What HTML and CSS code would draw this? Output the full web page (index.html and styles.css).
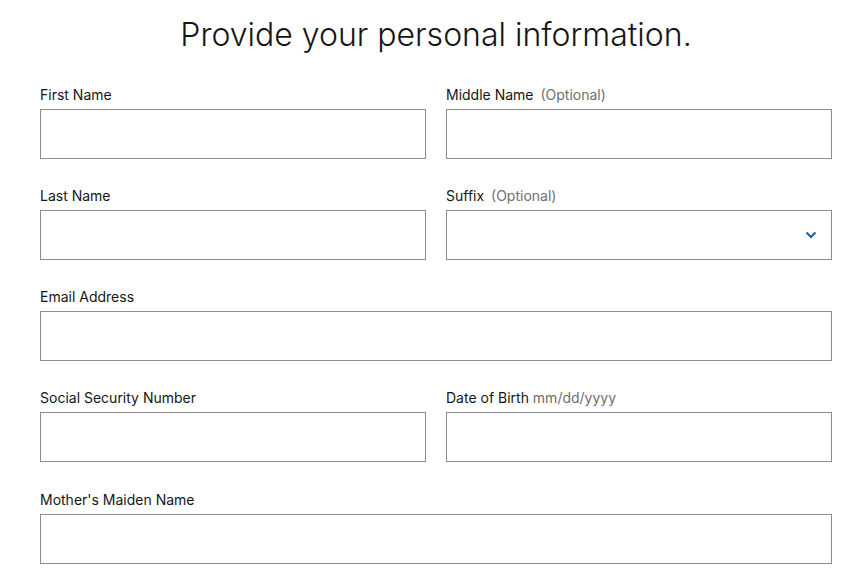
FILE: index.html
```html
<!DOCTYPE html>
<html>
<head>
<meta charset="utf-8">
<link rel="stylesheet" href="styles.css">
</head>
<body>
<main class="page">
  <h1 class="title">Provide your personal information.</h1>
  <form class="form">
    <div class="field">
      <label class="label">First Name</label>
      <div class="input"></div>
    </div>
    <div class="field">
      <label class="label">Middle Name <span class="hint">(Optional)</span></label>
      <div class="input"></div>
    </div>
    <div class="field">
      <label class="label">Last Name</label>
      <div class="input"></div>
    </div>
    <div class="field">
      <label class="label">Suffix <span class="hint">(Optional)</span></label>
      <div class="input select">
        <svg class="chev" width="12" height="8" viewBox="0 0 12 8"><path d="M1.5 1.5 L6 6 L10.5 1.5" fill="none" stroke="#1a5fa3" stroke-width="2"/></svg>
      </div>
    </div>
    <div class="field full">
      <label class="label">Email Address</label>
      <div class="input"></div>
    </div>
    <div class="field">
      <label class="label">Social Security Number</label>
      <div class="input"></div>
    </div>
    <div class="field">
      <label class="label">Date of Birth <span class="hint tight">mm/dd/yyyy</span></label>
      <div class="input"></div>
    </div>
    <div class="field full last">
      <label class="label">Mother's Maiden Name</label>
      <div class="input"></div>
    </div>
  </form>
</main>
</body>
</html>
```

FILE: styles.css
```css
* { box-sizing: border-box; }
html, body { margin: 0; padding: 0; background: #fff; }
body { font-family: "Inter", "Roboto", sans-serif; color: #161616; }
.page { padding: 15px 26px 0 40px; }
.title {
  margin: 0;
  text-align: center;
  font-weight: 300;
  font-size: 32px;
  line-height: 40px;
  letter-spacing: 0;
}
.form {
  margin-top: 30px;
  display: grid;
  grid-template-columns: 386px 386px;
  column-gap: 20px;
  row-gap: 27px;
}
.field { display: flex; flex-direction: column; gap: 4px; }
.field.full { grid-column: 1 / -1; }
.field.last { margin-top: 1px; }
.label { font-size: 14px; line-height: 20px; color: #161616; }
.hint { color: #6f6f6f; margin-left: 3px; }
.hint.tight { margin-left: 0; }
.input {
  height: 50px;
  border: 1px solid #8d8d8d;
  background: #fff;
}
.select { display: flex; align-items: center; justify-content: flex-end; padding-right: 14px; }
.chev { display: block; }
```
